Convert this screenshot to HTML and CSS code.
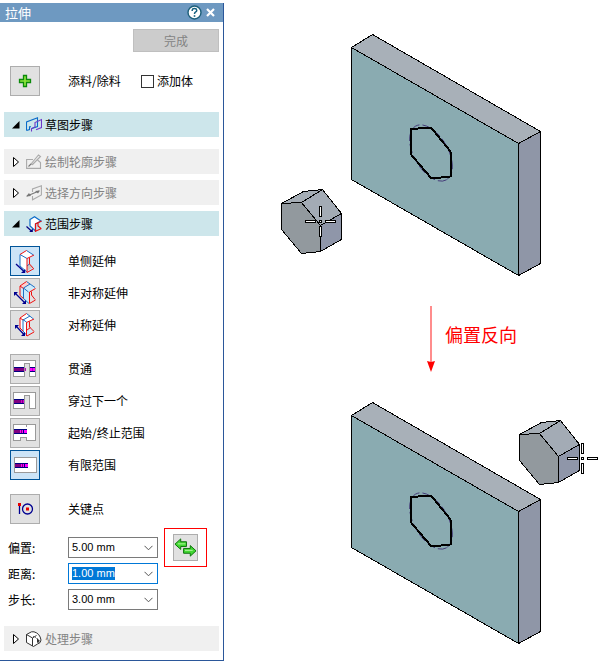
FILE: index.html
```html
<!DOCTYPE html>
<html lang="zh-CN">
<head>
    <meta charset="UTF-8">
    <meta name="viewport" content="width=device-width, initial-scale=1.0">
    <title>拉伸</title>
    <link rel="stylesheet" href="styles.css">
</head>
<body>
    <div class="page">
        <div class="panel">
            <div class="titlebar">
                <h1>拉伸</h1>
                <button class="title-btn" aria-label="帮助">
                    <svg width="15" height="15" viewBox="0 0 15 15">
                        <circle cx="7.5" cy="7.5" r="6.5" fill="#fff" stroke="#1d5f7a" stroke-width="1.4"/>
                        <path d="M5.2 6V5.2Q5.4 3.6 7.5 3.6T9.8 5.3Q9.8 6.4 8.4 7.2Q7.5 7.7 7.5 9" fill="none" stroke="#15607f" stroke-width="1.5"/>
                        <rect x="6.7" y="10.2" width="1.6" height="1.6" fill="#15607f"/>
                    </svg>
                </button>
                <button class="title-btn" aria-label="关闭">
                    <svg width="9" height="9" viewBox="0 0 9 9">
                        <path d="M1 1l7 7M8 1l-7 7" stroke="#fff" stroke-width="2.2"/>
                    </svg>
                </button>
            </div>

            <div class="panel-body">
                <div class="finish-row">
                    <button class="finish" disabled>完成</button>
                </div>

                <div class="option add-row">
                    <button class="tool" id="addCut">
                        <svg viewBox="0 0 30 30"><path d="M13.5 9.5h3v4h4v3h-4v4h-3v-4h-4v-3h4z" fill="#8fe63c" stroke="#0b8a0b" stroke-width="1.3"/></svg>
                    </button>
                    <label class="add-label" for="addCut">添料/除料</label>
                    <label class="check"><input type="checkbox">添加体</label>
                </div>

                <button class="step open step-sketch" aria-expanded="true">
                    <svg class="tri" viewBox="0 0 8 12"><path d="M0 9.5L7.5 2V9.5z"/></svg>
                    <svg class="step-icon" viewBox="0 0 16 16" fill="none">
                        <path d="M.5 13.5V5L11.5 .8V9.5L6 11.5M.5 13.5L3.5 12.5V9.8H5" stroke="#0a6bc9" stroke-width="1.1"/>
                        <path d="M5.5 14.5V11.5L9 10V5.5L15.5 2.5V10.5L10 12.8" stroke="#7038c8" stroke-width="1.1"/>
                    </svg>
                    草图步骤
                </button>
                <button class="step" aria-expanded="false" disabled>
                    <svg class="tri" viewBox="0 0 8 12"><path d="M1.5 1.5V10.5L6.5 6z" fill="#fff" stroke="#000"/></svg>
                    <svg class="step-icon" viewBox="0 0 16 16" fill="none" stroke="#aaa" stroke-width="1.1">
                        <path d="M7 5.5H.6V14.4H14.5V8.5L11.5 6"/>
                        <path d="M5 10L12.5 1L14.5 2.5L6.5 10.5z" fill="#eee"/><path d="M2.5 12.5L5 10" stroke="#777"/>
                    </svg>
                    绘制轮廓步骤
                </button>
                <button class="step" aria-expanded="false" disabled>
                    <svg class="tri" viewBox="0 0 8 12"><path d="M1.5 1.5V10.5L6.5 6z" fill="#fff" stroke="#000"/></svg>
                    <svg class="step-icon" viewBox="0 0 16 16" fill="none" stroke="#aaa" stroke-width="1.1">
                        <path d="M6.5 7V4L15.4 .8V10L6.5 14.8V11"/>
                        <path d="M1 11L13 6" stroke="#777"/><path d="M0 11.5L3 8L5 11zM9 6L14 5.5L12 8.5z" fill="#777" stroke="none"/>
                    </svg>
                    选择方向步骤
                </button>
                <button class="step open" aria-expanded="true">
                    <svg class="tri" viewBox="0 0 8 12"><path d="M0 9.5L7.5 2V9.5z"/></svg>
                    <svg class="step-icon" viewBox="0 0 16 16" fill="none" stroke-width="1.2">
                        <path d="M4 3.5L8.5 .8L15 5L9.5 8V15L4 10z" fill="#fff" stroke="#0a6bc9"/>
                        <path d="M15.5 5L9.5 7.8V15.2L15.5 12.5M12 7V10L15 12.5" stroke="#e81010"/>
                        <path d="M.5 10.5L6 15.5" stroke="#000080"/><path d="M6.8 12.5V16H3.2z" fill="#000080"/>
                    </svg>
                    范围步骤
                </button>

                <div class="options">
                    <div class="option">
                        <button class="tool active" id="oneSide">
                            <svg viewBox="0 0 30 30" fill="none">
                                <path d="M10 8.5L16.5 4.5L23.5 9L17 12.5V26L10 20z" fill="#fff"/>
                                <path d="M17 20.5L19 17.5L23 21L17 25z" fill="#c8c8c8"/>
                                <path d="M17 12.5L10 8.5V20L17 26M23.5 9L16.5 4.5M17 20L20 17.5" stroke="#1a6fc4"/>
                                <path d="M10 8.5L16.5 4.5M17 26.5V12.5L24 9M17 26.5L24 22.5M19.5 11.5V18L23.5 22.5" stroke="#f01010"/>
                                <path d="M6 18L14 25.5" stroke="#000090" stroke-width="1.3"/><path d="M15.2 23V27H11z" fill="#000090"/>
                            </svg>
                        </button>
                        <label for="oneSide">单侧延伸</label>
                    </div>
                    <div class="option">
                        <button class="tool" id="asymmetric">
                            <svg viewBox="0 0 30 30" fill="none">
                                <path d="M10 8L16 3.5L25 9.5L18.5 13.5V25.5L10 18z" fill="#cce9fa"/>
                                <path d="M10 8L16.5 3.5L20 6L13.5 10z" fill="#ffcccc"/>
                                <path d="M18.5 14L13.5 10V20.5L19 25.5M25 9.5L16.5 3.5M13.5 10L20 6" stroke="#1a6fc4"/>
                                <path d="M13.5 10.5L10 8V17.5L13.5 20.5M10 8L16.5 3.5M19.5 25.5V14L25.5 10.5M19.5 25.5L25.5 22M21.5 13.5V17L25 21.5" stroke="#f01010"/>
                                <path d="M5 15L15 25" stroke="#000090" stroke-width="1.3"/><path d="M4 14V18L8 14zM16 22V26H12z" fill="#000090"/>
                            </svg>
                        </button>
                        <label for="asymmetric">非对称延伸</label>
                    </div>
                    <div class="option">
                        <button class="tool" id="symmetric">
                            <svg viewBox="0 0 30 30" fill="none">
                                <path d="M10 8L16.5 3.5L23.5 8.5L17 12.5V26L10 19z" fill="#fff"/>
                                <path d="M17 21L20 17L23 21L17 25z" fill="#cce9fa"/>
                                <path d="M17 12.5L13 9.5V21L17 25.5M23.5 9L16.5 3.5M13 10L20 6" stroke="#1a6fc4"/>
                                <path d="M13 10L10 8V18L13 21M10 8L16.5 3.5M16.5 26V12.5L24 9M17 26L24 22M17 20L20.5 17.5M19.5 11.5V17L24 21.5" stroke="#f01010"/>
                                <path d="M6 16L14 24.5" stroke="#000090" stroke-width="1.3"/><path d="M5 15V19L9 15zM15 22V26H11z" fill="#000090"/>
                            </svg>
                        </button>
                        <label for="symmetric">对称延伸</label>
                    </div>
                </div>

                <div class="options extents">
                    <div class="option">
                        <button class="tool" id="throughAll">
                            <svg viewBox="0 0 30 30" shape-rendering="crispEdges">
                                <path d="M3.5 6.5h22v16h-6V9.500h-5v13H3.500z" fill="#fff" stroke="#999"/>
                                <path d="M4 13h10v5H4z" fill="#000080"/><path d="M4 14h10v3H4z" fill="#800080"/>
                                <path d="M20 13h5v5h-5z" fill="#000080"/><path d="M20 14h5v3h-5z" fill="#f0f"/>
                                <path d="M15 14h1v3h-1zM22 14h1v3h-1z" fill="#c000c0"/>
                            </svg>
                        </button>
                        <label for="throughAll">贯通</label>
                    </div>
                    <div class="option">
                        <button class="tool" id="throughNext">
                            <svg viewBox="0 0 30 30" shape-rendering="crispEdges">
                                <path d="M3.5 6.5h22v16h-6V9.500h-5v13H3.500z" fill="#fff" stroke="#999"/>
                                <path d="M4 13h10v5H4z" fill="#000080"/><path d="M4 14h10v3H4z" fill="#800080"/>
                                <path d="M11 14h1v3h-1zM13 14h1v3h-1z" fill="#d000d0"/>
                            </svg>
                        </button>
                        <label for="throughNext">穿过下一个</label>
                    </div>
                    <div class="option">
                        <button class="tool" id="fromTo">
                            <svg viewBox="0 0 30 30" shape-rendering="crispEdges">
                                <path d="M3.5 6.5h13v2V6.500h9v16h-9v-3h-6v3H3.500z" fill="#fff" stroke="#999"/>
                                <path d="M4 11h13v5H4z" fill="#000080"/><path d="M4 12h9v3H4z" fill="#800080"/>
                                <path d="M10 12h1v3h-1zM12 12h1v3h-1zM14 12h3v3h-3z" fill="#f0f"/>
                            </svg>
                        </button>
                        <label for="fromTo">起始/终止范围</label>
                    </div>
                    <div class="option">
                        <button class="tool active" id="finite">
                            <svg viewBox="0 0 30 30" shape-rendering="crispEdges">
                                <path d="M4.500 7.500h22v15h-22z" fill="#fff" stroke="#999"/>
                                <path d="M5 13h13v5H5z" fill="#000080"/><path d="M5 14h9v3H5z" fill="#800080"/>
                                <path d="M11 14h1v3h-1zM13 14h1v3h-1zM15 14h3v3h-3z" fill="#f0f"/>
                            </svg>
                        </button>
                        <label for="finite">有限范围</label>
                    </div>
                </div>

                <div class="option keypoint">
                    <button class="tool" id="keyPoint">
                        <svg viewBox="0 0 30 30" fill="none">
                            <path d="M9.5 11v9" stroke="#000090" stroke-width="1.3"/>
                            <circle cx="17.5" cy="15" r="5" stroke="#000090" stroke-width="1.3"/>
                            <path d="M8 9h3v3H8zM16 13.5h3v3h-3z" fill="#e80000"/>
                        </svg>
                    </button>
                    <label for="keyPoint">关键点</label>
                </div>

                <div class="values">
                    <div class="fields">
                        <div class="field">
                            <label for="offset">偏置:</label>
                            <div class="combo">
                                <input type="text" id="offset" value="5.00 mm">
                                <button aria-label="偏置列表"><svg width="9" height="6" viewBox="0 0 9 6"><path d="M.5 .8L4.5 4.8L8.5 .8" fill="none" stroke="#555"/></svg></button>
                            </div>
                        </div>
                        <div class="field">
                            <label for="distance">距离:</label>
                            <div class="combo">
                                <input type="text" id="distance" value="1.00 mm" autofocus>
                                <button aria-label="距离列表"><svg width="9" height="6" viewBox="0 0 9 6"><path d="M.5 .8L4.5 4.8L8.5 .8" fill="none" stroke="#555"/></svg></button>
                            </div>
                        </div>
                        <div class="field">
                            <label for="stepSize">步长:</label>
                            <div class="combo">
                                <input type="text" id="stepSize" value="3.00 mm">
                                <button aria-label="步长列表"><svg width="9" height="6" viewBox="0 0 9 6"><path d="M.5 .8L4.5 4.8L8.5 .8" fill="none" stroke="#555"/></svg></button>
                            </div>
                        </div>
                    </div>
                    <div class="callout">
                        <button class="flip" aria-label="偏置反向">
                            <svg viewBox="0 0 24 24" stroke="#087008" stroke-width="1" stroke-linejoin="round">
                                <path d="M1 8.5L7 3V6H13V11H7V14z" fill="#42d832"/>
                                <path d="M23 15.5L17 10V13H10V18H17V21z" fill="#42d832"/>
                                <path d="M4 8.2h8M11.5 15h8" stroke="#b4f7a0"/>
                            </svg>
                        </button>
                    </div>
                </div>

                <button class="step step-treat" aria-expanded="false" disabled>
                    <svg class="tri" viewBox="0 0 8 12"><path d="M1.5 1.5V10.5L6.5 6z" fill="#fff" stroke="#000"/></svg>
                    <svg class="step-icon" viewBox="0 0 16 16" fill="none" stroke="#333">
                        <path d="M.5 3.5L5.5 .8H8Q14 2.5 15 9Q15 12 11.5 13L7.5 15.5L.5 11.5zM.5 3.5L6.5 7V15M6.5 7L10.5 4.5" fill="#fff"/>
                        <path d="M7 5.5Q12 6.5 13 13" stroke-dasharray="1 1"/><path d="M11 7l3 3-3 2z" fill="#333" stroke="none"/>
                    </svg>
                    处理步骤
                </button>
            </div>
        </div>

        <div class="figure">
            <svg class="scene" viewBox="224 0 382 300">
                <defs>
                    <g id="plate" stroke="#000" stroke-linejoin="round">
                        <g shape-rendering="crispEdges">
                            <path d="M351.5 47.5L372.5 34.5L540.5 131.5L518.5 143.5z" fill="#a8b0b8"/>
                            <path d="M518.5 143.5L540.5 131.5V263.5L518.5 275.5z" fill="#8f96a7"/>
                            <path d="M351.5 47.5L518.5 143.5V275.5L351.5 179.5z" fill="#8aabb1"/>
                        </g>
                        <ellipse cx="431" cy="153" rx="31" ry="17" transform="rotate(60 431 153)" fill="none" stroke="#3d2f73" stroke-width=".8" stroke-dasharray="9 3"/>
                        <path d="M411 129L431 127.5L450.5 151.5V176.5L431.5 178.5L411 154.5z" fill="none" stroke-width="2" shape-rendering="crispEdges"/>
                    </g>
                    <g id="prism" stroke="#000" stroke-linejoin="round" shape-rendering="crispEdges">
                        <path d="M281.5 203.5L303.5 191.5L322.5 189.5L301.5 202.5z" fill="#a5adb5"/>
                        <path d="M301.5 202.5L322.5 189.5L341.5 213.5L320.5 225.5z" fill="#a3abb5"/>
                        <path d="M320.5 225.5L341.5 213.5V239.5L320.5 251.5z" fill="#8f96a9"/>
                        <path d="M281.5 203.5L301.5 202.5L320.5 225.5V251.5L301.5 253.5L281.5 229.5z" fill="#92999e"/>
                    </g>
                    <g id="cross" fill="#fff" stroke="#000" shape-rendering="crispEdges">
                        <path d="M-1 -15h2v10h-2zM-1 5h2v10h-2zM-15 -1h10v2h-10zM5 -1h10v2h-10zM-1 -1h2v2h-2z"/>
                    </g>
                </defs>
                <use href="#plate"/>
                <use href="#prism"/>
                <use href="#cross" x="320.5" y="221.5"/>
            </svg>

            <div class="caption">
                <svg width="8" height="66" viewBox="0 0 8 66">
                    <path d="M4 0V58" stroke="#ff4040" stroke-width="1.2"/>
                    <path d="M0 55L4 56L8 55L4 66z" fill="#f00"/>
                </svg>
                <span>偏置反向</span>
            </div>

            <svg class="scene" viewBox="224 375 382 288">
                <use href="#plate" y="368"/>
                <use href="#prism" x="238" y="231"/>
                <use href="#cross" x="582.5" y="458.5"/>
            </svg>
        </div>
    </div>

    <script>
        document.getElementById('distance').focus();
        document.getElementById('distance').select();
    </script>
</body>
</html>
```
FILE: styles.css
```css
* {
    margin: 0;
    padding: 0;
    box-sizing: border-box;
}

body {
    font-family: "Noto Sans CJK SC", sans-serif;
    font-size: 12px;
    line-height: 18px;
    color: #000;
    background: #fff;
}

button {
    font: inherit;
    color: inherit;
    border: none;
    background: none;
}

svg {
    display: block;
    flex-shrink: 0;
}

.page {
    display: flex;
    align-items: flex-start;
}

/* Command panel */
.panel {
    width: 224px;
    flex-shrink: 0;
    margin-top: 3px;
    border-right: 1px solid #2b579a;
    border-bottom: 1px solid #2b579a;
}

.titlebar {
    display: flex;
    align-items: center;
    gap: 4px;
    height: 19px;
    padding: 0 8px 0 5px;
    background: #6e99c1;
    color: #fff;
}

.titlebar h1 {
    flex: 1;
    font-size: 13px;
    font-weight: normal;
}

.panel-body {
    padding: 7px 4px 9px;
}

.finish-row {
    display: flex;
    justify-content: flex-end;
}

.finish {
    width: 86px;
    height: 23px;
    border: 1px solid #bfbfbf;
    background: #ccc;
    color: #838383;
}

.option {
    display: flex;
    align-items: center;
    padding-left: 6px;
}

.option label {
    margin-left: 28px;
}

.tool {
    width: 30px;
    height: 30px;
    border: 1px solid #adadad;
    background: #e1e1e1;
}

.tool svg {
    width: 30px;
    height: 30px;
    margin: -1px;
}

.tool.active {
    border-color: #005499;
    background: #cce4f7;
}

.add-row {
    margin-top: 14px;
}

.option .add-label {
    width: 73px;
}

.option .check {
    display: flex;
    align-items: center;
    gap: 3px;
    margin-left: 0;
}

.check input {
    appearance: none;
    width: 13px;
    height: 13px;
    border: 1px solid #333;
    background: #fff;
}

/* Step headers */
.step {
    display: flex;
    align-items: center;
    width: 100%;
    height: 25px;
    margin-top: 6px;
    padding-left: 8px;
    background: #f0f0f0;
    color: #838383;
    text-align: left;
}

.step.open {
    background: #cde6eb;
    color: #000;
}

.step-sketch {
    margin: 16px 0 12px;
}

.tri {
    width: 8px;
    height: 12px;
    margin-right: 6px;
}

.step-icon {
    width: 16px;
    height: 16px;
    margin-right: 3px;
}

.options {
    display: grid;
    gap: 2px;
    margin-top: 10px;
}

.extents {
    margin-top: 14px;
}

.keypoint {
    margin-top: 14px;
}

/* Value fields */
.values {
    display: flex;
    align-items: flex-start;
    gap: 6px;
    margin-top: 4px;
    padding-left: 4px;
}

.fields {
    display: grid;
    gap: 5px;
    padding-top: 9px;
}

.field {
    display: flex;
    align-items: center;
}

.field label {
    width: 60px;
}

.combo {
    display: flex;
    align-items: center;
    width: 90px;
    height: 21px;
    padding: 0 4px 0 3px;
    border: 1px solid #7a7a7a;
    background: #fff;
}

.combo:focus-within {
    border-color: #0078d7;
}

.combo input {
    flex: 1;
    min-width: 0;
    border: none;
    outline: none;
    background: none;
    font-family: "Liberation Sans", sans-serif;
    font-size: 11px;
    line-height: 13px;
}

.combo input::selection {
    background: #0078d7;
    color: #fff;
}

.callout {
    padding: 5px 8px;
    border: 1px solid #f00;
}

.flip {
    display: block;
    width: 25px;
    height: 27px;
    border: 1px solid #adadad;
    background: #e1e1e1;
}

.flip svg {
    width: 23px;
    height: 23px;
}

.step-treat {
    margin-top: 16px;
}

/* Model views */
.figure {
    flex: 1;
    min-width: 0;
}

.scene {
    width: 100%;
    height: auto;
}

.caption {
    display: flex;
    align-items: flex-start;
    gap: 10px;
    height: 75px;
    padding: 6px 0 0 203px;
    font-size: 18px;
    line-height: 56px;
    color: #f00;
}
```
